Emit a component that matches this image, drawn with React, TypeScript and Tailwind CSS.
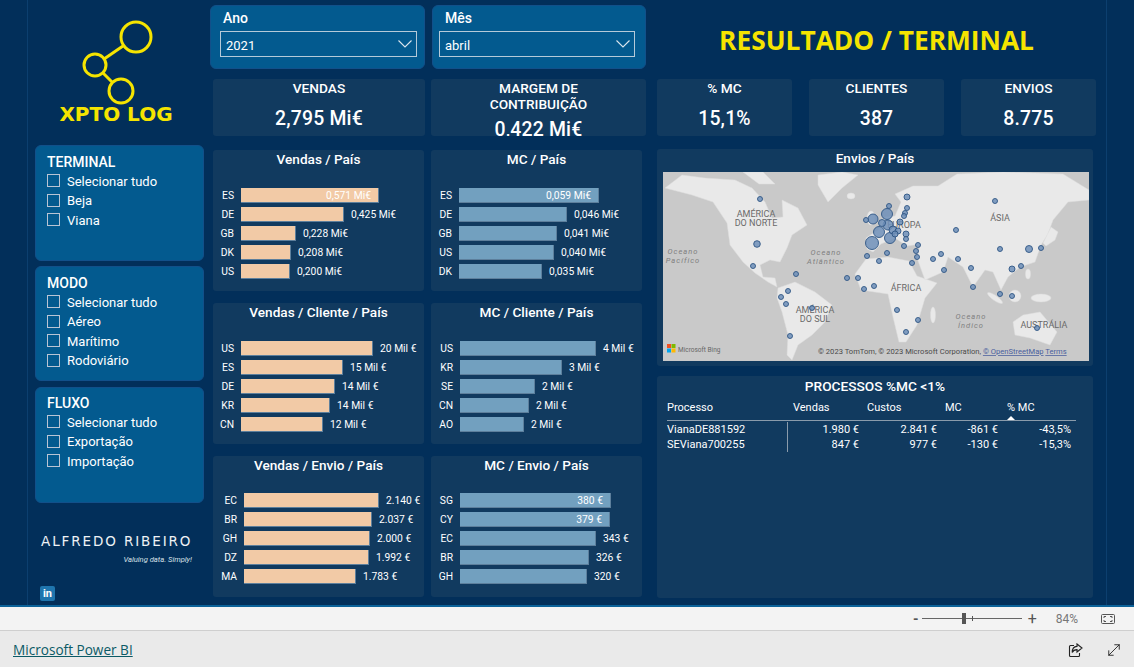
import { MoveDiagonal } from 'lucide-react';

type Bar = { code: string; width: number; value: string; inside?: boolean };

const vendasPais: Bar[] = [
  { code: 'ES', width: 138, value: '0,571 Mi€', inside: true },
  { code: 'DE', width: 103, value: '0,425 Mi€' },
  { code: 'GB', width: 55, value: '0,228 Mi€' },
  { code: 'DK', width: 50, value: '0,208 Mi€' },
  { code: 'US', width: 49, value: '0,200 Mi€' },
];
const mcPais: Bar[] = [
  { code: 'ES', width: 140, value: '0,059 Mi€', inside: true },
  { code: 'DE', width: 108, value: '0,046 Mi€' },
  { code: 'GB', width: 98, value: '0,041 Mi€' },
  { code: 'US', width: 95, value: '0,040 Mi€' },
  { code: 'DK', width: 83, value: '0,035 Mi€' },
];
const vendasCliente: Bar[] = [
  { code: 'US', width: 132, value: '20 Mil €' },
  { code: 'ES', width: 102, value: '15 Mil €' },
  { code: 'DE', width: 94, value: '14 Mil €' },
  { code: 'KR', width: 89, value: '14 Mil €' },
  { code: 'CN', width: 82, value: '12 Mil €' },
];
const mcCliente: Bar[] = [
  { code: 'US', width: 136, value: '4 Mil €' },
  { code: 'KR', width: 102, value: '3 Mil €' },
  { code: 'SE', width: 75, value: '2 Mil €' },
  { code: 'CN', width: 69, value: '2 Mil €' },
  { code: 'AO', width: 64, value: '2 Mil €' },
];
const vendasEnvio: Bar[] = [
  { code: 'EC', width: 135, value: '2.140 €' },
  { code: 'BR', width: 128, value: '2.037 €' },
  { code: 'GH', width: 126, value: '2.000 €' },
  { code: 'DZ', width: 125, value: '1.992 €' },
  { code: 'MA', width: 112, value: '1.783 €' },
];
const mcEnvio: Bar[] = [
  { code: 'SG', width: 151, value: '380 €', inside: true },
  { code: 'CY', width: 150, value: '379 €', inside: true },
  { code: 'EC', width: 136, value: '343 €' },
  { code: 'BR', width: 129, value: '326 €' },
  { code: 'GH', width: 127, value: '320 €' },
];

// x, y, r in map pixels
const bubbles = [
  [97, 27, 2.5], [94, 72, 3.3], [90, 94, 2.5], [133, 102, 2.5], [125, 119, 2.5], [118, 125, 2.5],
  [123, 132, 2.5], [149, 136, 2.5], [127, 164, 2.5], [184, 106, 2.5], [195, 106, 2.5], [201, 117, 2.5],
  [211, 114, 2.5], [204, 84, 2.5], [216, 89, 2.5], [224, 81, 2.5], [209, 71, 6.5], [216, 60, 5.5],
  [210, 47, 5], [224, 42, 5.5], [227, 66, 5.5], [226, 34, 2.5], [203, 48, 2.5], [225, 53, 5], [219, 51, 3.5],
  [244, 25, 3], [244, 36, 2.5], [242, 41, 2.5], [241, 44, 2.5], [237, 50, 3], [230, 58, 4], [235, 59, 3],
  [243, 62, 3], [243, 67, 2.5], [232, 62, 3], [241, 74, 2.5], [255, 73, 2.5], [253, 79, 2.5], [254, 85, 2.5],
  [249, 91, 2.5], [270, 87, 2.5], [278, 82, 2.5], [293, 58, 2.5], [295, 87, 2.5], [281, 98, 2.5], [308, 96, 2.5],
  [310, 115, 2.5], [332, 29, 2.5], [337, 77, 2.5], [366, 77, 3.5], [378, 76, 2.5], [358, 94, 2.5], [349, 97, 3],
  [337, 122, 2.5], [349, 124, 2.5], [234, 138, 2.5], [255, 148, 2.5], [243, 160, 2.5], [374, 156, 2.5],
];

function BarPanel({ title, bars, color, labelWidth, top = 'mt-[18px]' }: { title: string; bars: Bar[]; color: string; labelWidth: string; top?: string }) {
  return (
    <div className="h-[141px] w-[211px] overflow-hidden rounded-[3px] bg-[#113a5f]">
      <div className="h-[20px] text-center text-[13.6px] font-medium leading-[18px] text-white">{title}</div>
      <div className={`${top} flex flex-col gap-[4px]`}>
        {bars.map((bar) => (
          <div key={bar.code} className="flex h-[15px] items-center">
            <div className={`${labelWidth} pr-[7px] text-right text-[10.3px] text-white`}>{bar.code}</div>
            <div
              className={`h-[15px] ${color} flex items-center justify-end border-b border-r border-[#5d7f9c]`}
              style={{ width: bar.width }}
            >
              {bar.inside && <span className="pr-[7px] pt-[1px] text-[10.3px] text-white">{bar.value}</span>}
            </div>
            {!bar.inside && <span className="pl-[7px] pt-[1px] text-[10.3px] text-white">{bar.value}</span>}
          </div>
        ))}
      </div>
    </div>
  );
}

function Slicer({ title, items, height, top = 'pt-[6px]' }: { title: string; items: string[]; height: string; top?: string }) {
  return (
    <div className={`${height} ${top} w-[169px] rounded-[6px] border border-[#12508a] bg-[#035a8f] pl-[11px]`}>
      <div className="h-[20px] text-[14px] font-medium leading-[20px] text-white">{title}</div>
      <div className="mt-[2px] flex flex-col gap-[6.5px]">
        {items.map((item) => (
          <div key={item} className="flex h-[13px] items-center gap-[7px]">
            <span className="h-[13px] w-[13px] border border-[#b9c4d4]" />
            <span className="pt-[1px] text-[13px] leading-[13px] text-white">{item}</span>
          </div>
        ))}
      </div>
    </div>
  );
}

function Dropdown({ title, value, outer, inner }: { title: string; value: string; outer: string; inner: string }) {
  return (
    <div className={`${outer} h-[64px] rounded-[6px] border border-[#12508a] bg-[#035a8f] pt-[2px]`}>
      <div className="h-[20px] pl-[12px] text-[14px] font-medium leading-[20px] text-white">{title}</div>
      <div className={`${inner} mx-[9px] mt-[3px] flex h-[26px] items-center justify-between border border-[#b5cad9] pl-[5px] pr-[4px]`}>
        <span className="pt-[4px] text-[13px] leading-[18px] text-white">{value}</span>
        <svg width="14" height="8" viewBox="0 0 14 8" fill="none" stroke="#dbe6ee" strokeWidth="1.1">
          <polyline points="0.5,0.5 7,7 13.5,0.5" />
        </svg>
      </div>
    </div>
  );
}

function Kpi({ title, value, width }: { title: string; value: string; width: string }) {
  return (
    <div className={`${width} h-[57px] rounded-[3px] bg-[#113a5f] text-center`}>
      <div className="h-[19px] text-[13.7px] font-medium leading-[18px] text-white">{title}</div>
      <div className="mt-[9px] text-[19.4px] font-medium leading-[24px] tracking-[0.2px] text-white">{value}</div>
    </div>
  );
}

function WorldMap() {
  return (
    <svg width="426" height="189" viewBox="0 0 426 189" className="block">
      <rect width="426" height="189" fill="#c9c9c9" />
      <g fill="#e9e9e9" stroke="#dcdcdc" strokeWidth="0.5" className="blur-[0.4px]">
        <polygon points="2,16 19,3 42,6 72,8 89,16 102,30 109,46 120,45 119,28 135,36 144,53 129,63 124,76 117,90 107,88 97,93 100,105 112,106 114,115 105,110 92,101 80,90 67,73 64,51 50,30 29,23" />
        <polygon points="155,3 179,0 195,3 179,16 165,30 155,13" />
        <polygon points="80,0 100,0 112,12 96,12" />
        <polygon points="115,116 132,110 152,120 169,133 162,150 149,163 135,173 129,188 124,183 125,163 119,140 114,126" />
        <polygon points="192,102 203,87 225,85 246,89 254,104 274,111 262,126 254,153 243,170 236,170 230,145 225,122 198,118" />
        <polygon points="204,77 203,66 215,58 222,45 232,44 238,30 232,22 250,14 275,14 294,2 340,0 400,2 426,18 426,28 405,30 390,48 385,62 378,73 372,90 357,95 345,105 338,118 330,100 322,98 310,115 300,95 285,85 280,100 262,108 254,86 257,72 244,74 232,66 218,72 210,80" />
        <polygon points="388,55 395,60 392,68 383,74 380,71" />
        <polygon points="350,150 360,143 377,140 394,160 387,173 367,166 352,163" />
        <ellipse cx="208" cy="46" rx="4" ry="7" />
        <ellipse cx="188" cy="24" rx="4" ry="3" />
        <ellipse cx="270" cy="143" rx="2.5" ry="8" />
        <ellipse cx="332" cy="126" rx="9" ry="2.5" transform="rotate(35 332 126)" />
        <ellipse cx="352" cy="124" rx="6" ry="6" />
        <ellipse cx="378" cy="126" rx="10" ry="4" />
        <ellipse cx="365" cy="102" rx="2.5" ry="5" />
      </g>
      <g fontFamily="Roboto, sans-serif" fontSize="9" fill="#6a6a6a" textAnchor="middle">
        <text x="93" y="45">AMÉRICA</text>
        <text x="93" y="54">DO NORTE</text>
        <text x="152" y="141">AMÉRICA</text>
        <text x="152" y="150">DO SUL</text>
        <text x="243" y="119">ÁFRICA</text>
        <text x="337" y="49">ÁSIA</text>
        <text x="241" y="56">EUROPA</text>
        <text x="381" y="156">AUSTRÁLIA</text>
      </g>
      <g fontFamily="Roboto, sans-serif" fontSize="7.5" fontStyle="italic" letterSpacing="1" fill="#808080" textAnchor="middle">
        <text x="20" y="82">Oceano</text>
        <text x="20" y="91">Pacífico</text>
        <text x="163" y="83">Oceano</text>
        <text x="163" y="92">Atlântico</text>
        <text x="308" y="147">Oceano</text>
        <text x="308" y="156">Índico</text>
      </g>
      <g fill="#6f8fb8" fillOpacity="0.85" stroke="#2f5685" strokeWidth="0.9">
        {bubbles.map(([x, y, r]) => (
          <circle key={`${x}-${y}`} cx={x} cy={y} r={r} />
        ))}
      </g>
      <rect x="4" y="172" width="4" height="4" fill="#f25022" />
      <rect x="8.5" y="172" width="4" height="4" fill="#7fba00" />
      <rect x="4" y="176.5" width="4" height="4" fill="#00a4ef" />
      <rect x="8.5" y="176.5" width="4" height="4" fill="#ffb900" />
      <text x="15" y="180" fontFamily="Roboto, sans-serif" fontSize="6.5" fill="#666">Microsoft Bing</text>
      <text x="155" y="182" fontFamily="Roboto, sans-serif" fontSize="7.6" fill="#4a4a4a">
        © 2023 TomTom, © 2023 Microsoft Corporation,{' '}
        <tspan fill="#4a5f9e" textDecoration="underline">© OpenStreetMap</tspan>
        {'  '}
        <tspan fill="#4a5f9e" textDecoration="underline">Terms</tspan>
      </text>
    </svg>
  );
}

function ProcessTable() {
  const rows = [
    ['VianaDE881592', '1.980 €', '2.841 €', '-861 €', '-43,5%'],
    ['SEViana700255', '847 €', '977 €', '-130 €', '-15,3%'],
  ];
  return (
    <div className="mt-[10px] h-[222px] w-[436px] rounded-[3px] bg-[#113a5f] pl-[10px]">
      <div className="h-[20px] pr-[10px] text-center text-[13.7px] font-medium leading-[20px] text-white">PROCESSOS %MC &lt;1%</div>
      <div className="mt-[1px] w-[409px] border-b border-[#8a9bab]">
        <div className="grid h-[23px] grid-cols-[121px_76px_78px_61px_73px] text-[11px] leading-[22px] text-white">
          <div>Processo</div>
          <div className="pl-[5px]">Vendas</div>
          <div className="pl-[3px]">Custos</div>
          <div className="pl-[3px]">MC</div>
          <div className="relative pl-[4px]">
            % MC
            <svg width="8" height="4" viewBox="0 0 8 4" className="absolute left-[4px] top-[19px]">
              <polygon points="0,4 4,0 8,4" fill="#ffffff" />
            </svg>
          </div>
        </div>
      </div>
      <div className="w-[409px] pt-[1px]">
        {rows.map((row) => (
          <div key={row[0]} className="grid h-[15px] grid-cols-[121px_76px_78px_61px_73px] text-[11px] leading-[15px] text-white">
            <div className="border-r border-[#8a9bab]">{row[0]}</div>
            <div className="pr-[5px] text-right">{row[1]}</div>
            <div className="pr-[5px] text-right">{row[2]}</div>
            <div className="pr-[5px] text-right">{row[3]}</div>
            <div className="pr-[5px] text-right">{row[4]}</div>
          </div>
        ))}
      </div>
    </div>
  );
}

export default function App() {
  return (
    <div className="flex h-[667px] w-[1134px] flex-col overflow-hidden bg-[#eaeaea] font-['Roboto',sans-serif]">
      <div className="flex h-[607px] border-b-2 border-[#0b6299] bg-[#022f5a]">
        <div className="w-[28px] border-r border-[#0c3f6f]" />

        {/* left column */}
        <div className="w-[182px] pl-[7px]">
          <div className="flex h-[145px] flex-col items-center pr-[13px]">
            <svg width="120" height="90" viewBox="0 0 120 90" className="mr-[42px] mt-[17px] shrink-0" fill="none" stroke="#f5e400" strokeWidth="3">
              <circle cx="101" cy="20" r="15" />
              <circle cx="60" cy="48" r="11" />
              <circle cx="86" cy="74" r="12" />
              <line x1="69" y1="42" x2="88" y2="29" />
              <line x1="68" y1="56" x2="77" y2="65" />
            </svg>
            <div className="-mt-[4px] whitespace-nowrap font-['DejaVu_Sans',sans-serif] text-[20px] font-bold leading-[22px] text-[#f5e400]">XPTO LOG</div>
          </div>
          <div className="flex flex-col">
            <Slicer title="TERMINAL" items={['Selecionar tudo', 'Beja', 'Viana']} height="h-[116px]" />
            <div className="mt-[5px]">
              <Slicer title="MODO" items={['Selecionar tudo', 'Aéreo', 'Marítimo', 'Rodoviário']} height="h-[115px]" />
            </div>
            <div className="mt-[6px]">
              <Slicer title="FLUXO" items={['Selecionar tudo', 'Exportação', 'Importação']} height="h-[116px]" top="pt-[5px]" />
            </div>
          </div>
          <div className="mt-[31px] w-[157px] pl-[6px]">
            <div className="whitespace-nowrap font-['DejaVu_Sans',sans-serif] text-[13.5px] leading-[14px] tracking-[1.9px] text-[#eef2f6]">ALFREDO RIBEIRO</div>
            <div className="mt-[8px] whitespace-nowrap text-right text-[7.6px] italic leading-[8px] text-[#d8e0e8]">Valuing data. Simply!</div>
          </div>
          <div className="ml-[5px] mt-[22px] flex h-[15px] w-[15px] items-center justify-center rounded-[2px] bg-[#1f75ad] text-[11px] font-bold leading-none text-white">in</div>
        </div>

        {/* centre column */}
        <div className="w-[436px] pt-[5px]">
          <div className="flex gap-[7px]">
            <Dropdown title="Ano" value="2021" outer="w-[215px]" inner="w-[197px]" />
            <Dropdown title="Mês" value="abril" outer="w-[214px]" inner="ml-[6px] w-[196px]" />
          </div>
          <div className="ml-[3px] mt-[10px] flex gap-[6px]">
            <Kpi title="VENDAS" value="2,795 Mi€" width="w-[212px]" />
            <div className="h-[57px] w-[215px] overflow-hidden rounded-[3px] bg-[#113a5f] pt-[1px] text-center">
              <div className="text-[13.7px] font-medium leading-[16px] text-white">
                MARGEM DE
                <br />
                CONTRIBUIÇÃO
              </div>
              <div className="mt-[6px] text-[19.4px] font-medium leading-[24px] tracking-[0.2px] text-white">0,422 Mi€</div>
            </div>
          </div>
          <div className="ml-[3px] mt-[14px] flex flex-col gap-[12px]">
            <div className="flex gap-[7px]">
              <BarPanel title="Vendas / País" bars={vendasPais} color="bg-[#f2caa6]" labelWidth="w-[28px]" />
              <BarPanel title="MC / País" bars={mcPais} color="bg-[#72a0bf]" labelWidth="w-[28px]" />
            </div>
            <div className="flex gap-[7px]">
              <BarPanel title="Vendas / Cliente / País" bars={vendasCliente} color="bg-[#f2caa6]" labelWidth="w-[28px]" />
              <BarPanel title="MC / Cliente / País" bars={mcCliente} color="bg-[#72a0bf]" labelWidth="w-[29px]" />
            </div>
            <div className="flex gap-[7px]">
              <BarPanel title="Vendas / Envio / País" bars={vendasEnvio} color="bg-[#f2caa6]" labelWidth="w-[31px]" top="mt-[17px]" />
              <BarPanel title="MC / Envio / País" bars={mcEnvio} color="bg-[#72a0bf]" labelWidth="w-[29px]" top="mt-[17px]" />
            </div>
          </div>
        </div>

        {/* right column */}
        <div className="ml-[11px] w-[439px]">
          <div className="flex h-[79px] items-center justify-center pt-[2px]">
            <span className="whitespace-nowrap font-['Open_Sans',sans-serif] text-[26.3px] font-bold text-[#f5e400]">RESULTADO / TERMINAL</span>
          </div>
          <div className="flex gap-[17px]">
            <Kpi title="% MC" value="15,1%" width="w-[135px]" />
            <Kpi title="CLIENTES" value="387" width="w-[135px]" />
            <Kpi title="ENVIOS" value="8.775" width="w-[135px]" />
          </div>
          <div className="mt-[13px] h-[217px] w-[436px] rounded-[3px] bg-[#113a5f] px-[6px]">
            <div className="h-[23px] text-center text-[13.6px] font-medium leading-[19px] text-white">Envios / País</div>
            <WorldMap />
          </div>
          <ProcessTable />
        </div>

        <div className="ml-[10px] flex-1 border-l border-[#0c3f6f]" />
      </div>

      {/* zoom bar */}
      <div className="flex h-[24px] shrink-0 items-center justify-end border-b border-[#cfcfcf] bg-[#f3f3f3] pr-[19px]">
        <span className="text-[14px] font-bold leading-none text-[#555]">-</span>
        <div className="relative ml-[3px] h-[1px] w-[100px] bg-[#666]">
          <span className="absolute left-[40px] top-[-5px] h-[11px] w-[4px] bg-[#555]" />
          <span className="absolute left-[50px] top-[-2px] h-[5px] w-[1px] bg-[#555]" />
        </div>
        <span className="ml-[6px] text-[16px] leading-none text-[#555]">+</span>
        <span className="ml-[19px] text-[12px] text-[#777]">84%</span>
        <svg width="14" height="10" viewBox="0 0 14 10" className="ml-[23px]" fill="none" stroke="#555" strokeWidth="1">
          <rect x="0.5" y="0.5" width="13" height="9" rx="1" />
          <polyline points="3,4 3,2.5 5,2.5" />
          <polyline points="9,2.5 11,2.5 11,4" />
          <polyline points="3,6 3,7.5 5,7.5" />
          <polyline points="9,7.5 11,7.5 11,6" />
        </svg>
      </div>

      {/* footer */}
      <div className="flex flex-1 items-center justify-between pl-[13px] pr-[11px] pt-[2px]">
        <a href="#" className="font-['Open_Sans',sans-serif] text-[13.6px] text-[#0b5a66] underline">Microsoft Power BI</a>
        <div className="flex items-center gap-[22px]">
          <svg width="15" height="15" viewBox="0 0 15 15" fill="none" stroke="#222" strokeWidth="1.1">
            <path d="M6 2.5H2.5a1 1 0 0 0-1 1v9a1 1 0 0 0 1 1h8a1 1 0 0 0 1-1V10" />
            <path d="M9 1l5 4-5 4V6.6C6.5 6.6 5 7.7 4.2 9.5 4.2 6.3 6 3.6 9 3.4z" />
          </svg>
          <MoveDiagonal size={18} strokeWidth={1.2} color="#222" />
        </div>
      </div>
    </div>
  );
}
